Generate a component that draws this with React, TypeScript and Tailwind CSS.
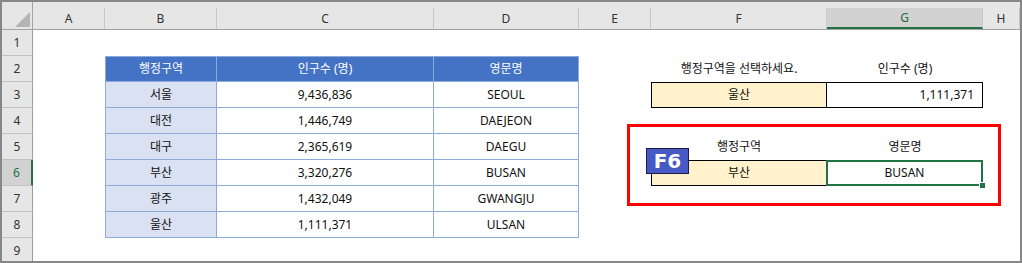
import React from 'react';

const cols = ['A', 'B', 'C', 'D', 'E', 'F', 'G', 'H'];

// 행정구역 / 인구수 / 영문명
const regions: [string, string, string][] = [
  ['서울', '9,436,836', 'SEOUL'],
  ['대전', '1,446,749', 'DAEJEON'],
  ['대구', '2,365,619', 'DAEGU'],
  ['부산', '3,320,276', 'BUSAN'],
  ['광주', '1,432,049', 'GWANGJU'],
  ['울산', '1,111,371', 'ULSAN'],
];

const tbl = 'border-r border-b border-[#8eaadb]';
const head = 'bg-[#4472c4] text-white border-t';

type CellDef = { text?: string; cls?: string; selected?: boolean };

function cellAt(row: number, col: string): CellDef {
  if (row >= 2 && row <= 8 && (col === 'B' || col === 'C' || col === 'D')) {
    if (row === 2) {
      const labels: Record<string, string> = { B: '행정구역', C: '인구수 (명)', D: '영문명' };
      return { text: labels[col], cls: `${head} ${tbl} ${col === 'B' ? 'border-l' : ''}` };
    }
    const [name, pop, eng] = regions[row - 3];
    if (col === 'B') return { text: name, cls: `bg-[#d9e1f2] border-l ${tbl}` };
    if (col === 'C') return { text: pop, cls: tbl };
    return { text: eng, cls: tbl };
  }
  if (row === 2 && col === 'F') return { text: '행정구역을 선택하세요.' };
  if (row === 2 && col === 'G') return { text: '인구수 (명)' };
  if (row === 3 && col === 'F') return { text: '울산', cls: 'bg-[#fff2cc] border border-black' };
  if (row === 3 && col === 'G') return { text: '1,111,371', cls: 'border-y border-r border-black justify-end pr-2' };
  if (row === 5 && col === 'F') return { text: '행정구역' };
  if (row === 5 && col === 'G') return { text: '영문명' };
  if (row === 6 && col === 'F') return { text: '부산', cls: 'bg-[#fff2cc] border border-black' };
  if (row === 6 && col === 'G') return { text: 'BUSAN', cls: 'border-y border-r border-black', selected: true };
  return {};
}

function ColumnHeader({ label }: { label: string }) {
  const active = label === 'G';
  return (
    <div className="flex flex-col bg-[#e6e6e6] border-b border-[#a3a3a3]">
      <div className="h-[6px]" />
      <div
        className={
          active
            ? 'flex-1 flex items-center justify-center bg-[#d2d2d2] border-r border-[#c8c8c8] border-b-2 border-b-[#217346] text-[#1e6b41]'
            : 'flex-1 flex items-center justify-center border-r border-[#c8c8c8] text-[#333]'
        }
      >
        {label}
      </div>
    </div>
  );
}

function RowHeader({ n }: { n: number }) {
  const active = n === 6;
  return (
    <div
      className={
        active
          ? 'flex items-center justify-center bg-[#d2d2d2] border-b border-[#c2c2c2] border-r-2 border-r-[#217346] text-[#217346]'
          : 'flex items-center justify-center bg-[#e6e6e6] border-b border-[#c2c2c2] border-r border-r-[#9e9e9e] text-[#333]'
      }
    >
      {n}
    </div>
  );
}

export default function App() {
  const rows = [1, 2, 3, 4, 5, 6, 7, 8, 9];
  return (
    <div className="relative w-[1022px] h-[263px] overflow-hidden border-2 border-[#878787] bg-white font-['Noto_Sans','Noto_Sans_CJK_KR',sans-serif] text-[12px] text-[#111]">
      <div className="grid grid-cols-[31px_72px_112px_217px_145px_72px_176px_156px_1fr] grid-rows-[28px_repeat(9,26px)]">
        {/* select-all corner */}
        <div className="relative bg-[#e6e6e6] border-b border-r border-[#a3a3a3]">
          <svg className="absolute right-[2px] bottom-[2px]" width="15" height="15" viewBox="0 0 15 15">
            <polygon points="15,0 15,15 0,15" fill="#b4b4b4" />
          </svg>
        </div>
        {cols.map((c) => (
          <ColumnHeader key={c} label={c} />
        ))}

        {rows.map((r) => (
          <React.Fragment key={r}>
            <RowHeader n={r} />
            {cols.map((c) => {
              const cell = cellAt(r, c);
              return (
                <div
                  key={c}
                  className={`relative flex items-center justify-center whitespace-nowrap ${cell.cls ?? ''}`}
                >
                  {cell.text}
                  {cell.selected && (
                    <>
                      <div className="absolute -left-px -top-px -right-px -bottom-px border-2 border-[#217346]" />
                      <div className="absolute -right-[4px] -bottom-[4px] w-[7px] h-[7px] bg-[#217346] border border-white" />
                    </>
                  )}
                </div>
              );
            })}
          </React.Fragment>
        ))}
      </div>

      {/* highlight around the lookup result */}
      <div className="absolute left-[625px] top-[122px] w-[374px] h-[82px] border-[3px] border-[#ff0000] pointer-events-none" />

      {/* key badge */}
      <div className="absolute left-[644px] top-[146px] w-[43px] h-[26px] flex items-center justify-center bg-[#4659c4] border border-[#1c1c44] text-white font-['DejaVu_Sans',sans-serif] font-bold text-[20px] leading-none">
        F6
      </div>
    </div>
  );
}
